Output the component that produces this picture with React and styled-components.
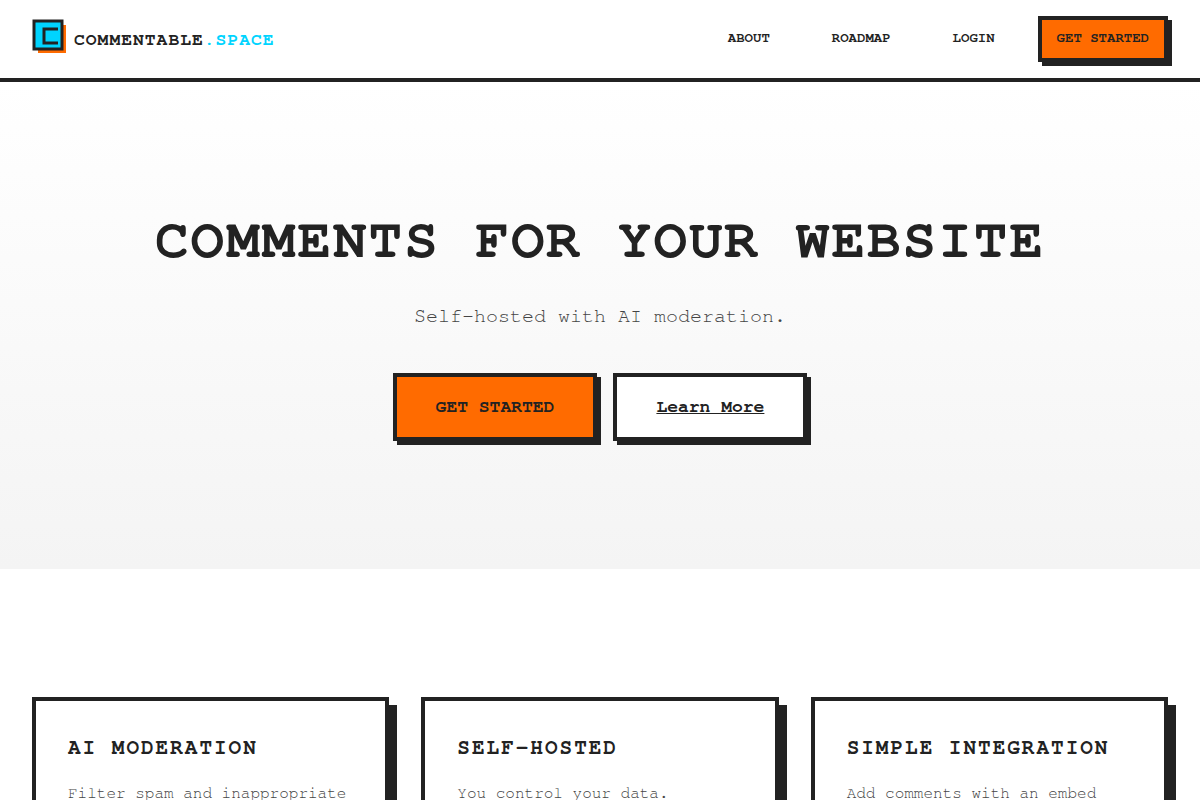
import React from 'react';
import styled, { createGlobalStyle } from 'styled-components';

const GlobalStyle = createGlobalStyle`
  * {
    box-sizing: border-box;
    margin: 0;
  }

  body {
    background: #fff;
    color: #222;
    font-family: FreeMono, "Courier New", "Liberation Mono", monospace;
  }
`;

const Header = styled.header`
  display: flex;
  align-items: center;
  justify-content: space-between;
  padding: 16px 32px;
  border-bottom: 4px solid #222;
`;

const Brand = styled.a`
  display: flex;
  align-items: flex-end;
  gap: 8px;
  padding-bottom: 7px;
  color: #222;
  font-size: 18px;
  font-weight: 700;
  line-height: 26px;
  letter-spacing: 1px;
  text-decoration: none;
`;

const Accent = styled.span`
  color: #00d4ff;
`;

const Nav = styled.nav`
  display: flex;
  align-items: center;
  gap: 24px;
`;

const NavLink = styled.a`
  padding: 7px 19px 9px;
  color: #222;
  font-size: 14px;
  font-weight: 700;
  text-decoration: none;
`;

const Button = styled.button`
  padding: ${({ $large }) => ($large ? '20px 39px' : '10px 15px 12px')};
  border: 4px solid #222;
  background: #ff6b00;
  box-shadow: 4px 4px 0 #222;
  color: #222;
  font-family: inherit;
  font-size: ${({ $large }) => ($large ? '18px' : '14px')};
  font-weight: 700;
  line-height: ${({ $large }) => ($large ? '20px' : '16px')};
`;

const LinkButton = styled.a`
  padding: 20px 39px;
  border: 4px solid #222;
  background: #fff;
  box-shadow: 4px 4px 0 #222;
  color: #222;
  font-size: 18px;
  font-weight: 700;
  line-height: 20px;
`;

const Hero = styled.section`
  padding: 128px 32px;
  background: linear-gradient(180deg, #fff 0%, #f4f4f4 100%);
  text-align: center;
`;

const Title = styled.h1`
  margin-bottom: 28px;
  font-size: 56px;
  line-height: 61px;
  letter-spacing: 2px;
`;

const Subtitle = styled.p`
  margin-bottom: 40px;
  color: #444;
  font-size: 20px;
  line-height: 34px;
`;

const Actions = styled.div`
  display: flex;
  flex-wrap: wrap;
  justify-content: center;
  gap: 16px;
`;

const Features = styled.section`
  display: grid;
  grid-template-columns: repeat(auto-fit, minmax(300px, 1fr));
  gap: 32px;
  padding: 128px 32px;
`;

const Card = styled.article`
  padding: 32px;
  border: 4px solid #222;
  background: #fff;
  box-shadow: 8px 8px 0 #222;
`;

const CardTitle = styled.h3`
  margin-bottom: 16px;
  font-size: 21px;
  line-height: 30px;
  letter-spacing: 2px;
`;

const CardText = styled.p`
  color: #444;
  font-size: 16px;
  line-height: 28px;
`;

const features = [
  { title: 'AI MODERATION', text: 'Filter spam and inappropriate' },
  { title: 'SELF-HOSTED', text: 'You control your data.' },
  { title: 'SIMPLE INTEGRATION', text: 'Add comments with an embed' },
];

function Logo() {
  return (
    <svg width="34" height="34" viewBox="0 0 34 34" aria-hidden="true">
      <rect x="6" y="6" width="28" height="28" fill="#ff6b00" />
      <rect x="2" y="2" width="28" height="28" fill="#00d4ff" stroke="#222" strokeWidth="3" />
      <path d="M26 10H12V24H26" fill="none" stroke="#222" strokeWidth="3" />
    </svg>
  );
}

function App() {
  return (
    <>
      <GlobalStyle />
      <Header>
        <Brand href="#">
          <Logo />
          <span>
            COMMENTABLE<Accent>.SPACE</Accent>
          </span>
        </Brand>
        <Nav>
          <NavLink href="#about">ABOUT</NavLink>
          <NavLink href="#roadmap">ROADMAP</NavLink>
          <NavLink href="#login">LOGIN</NavLink>
          <Button type="button">GET STARTED</Button>
        </Nav>
      </Header>

      <main>
        <Hero>
          <Title>COMMENTS FOR YOUR WEBSITE</Title>
          <Subtitle>Self-hosted with AI moderation.</Subtitle>
          <Actions>
            <Button type="button" $large>GET STARTED</Button>
            <LinkButton href="#about">Learn More</LinkButton>
          </Actions>
        </Hero>

        <Features id="about">
          {features.map(({ title, text }) => (
            <Card key={title}>
              <CardTitle>{title}</CardTitle>
              <CardText>{text}</CardText>
            </Card>
          ))}
        </Features>
      </main>
    </>
  );
}

export default App;
